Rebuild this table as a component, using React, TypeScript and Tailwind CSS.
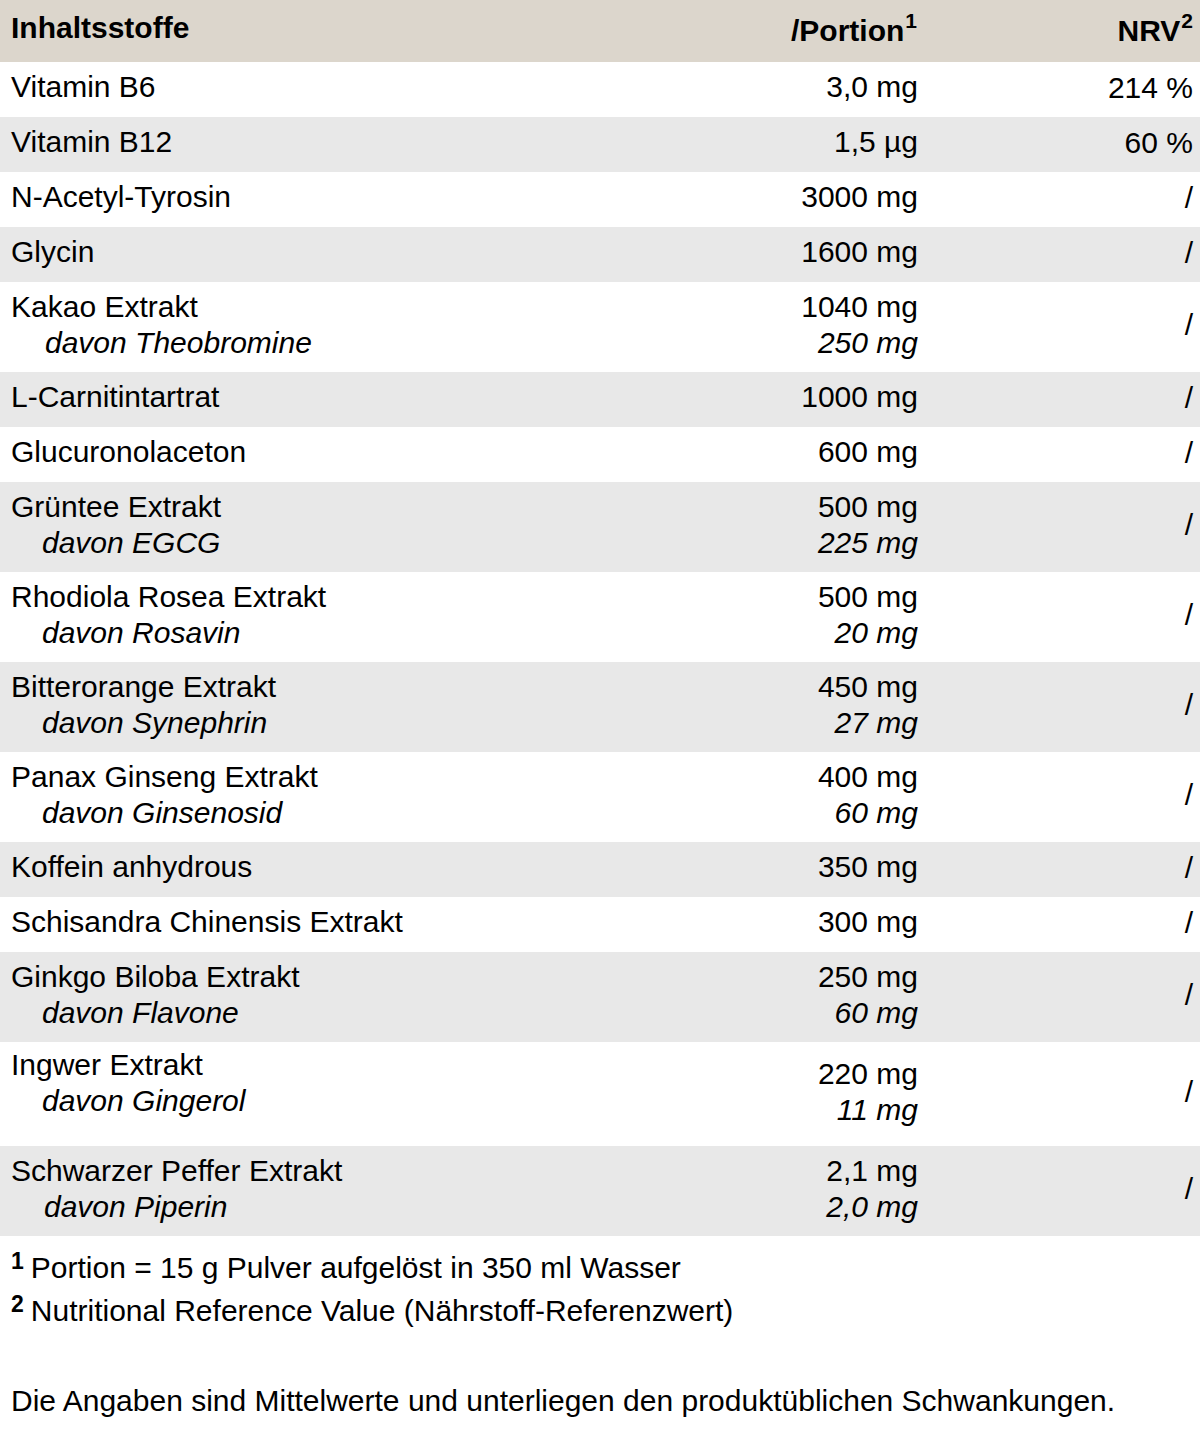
import React from 'react';

type Row = {
  name: string;
  amount: string;
  nrv: string;
  sub?: string;
  subAmount?: string;
  subIndent?: string;
};

const rows: Row[] = [
  { name: 'Vitamin B6', amount: '3,0 mg', nrv: '214 %' },
  { name: 'Vitamin B12', amount: '1,5 µg', nrv: '60 %' },
  { name: 'N-Acetyl-Tyrosin', amount: '3000 mg', nrv: '/' },
  { name: 'Glycin', amount: '1600 mg', nrv: '/' },
  { name: 'Kakao Extrakt', amount: '1040 mg', nrv: '/', sub: 'davon Theobromine', subAmount: '250 mg', subIndent: 'pl-[34px]' },
  { name: 'L-Carnitintartrat', amount: '1000 mg', nrv: '/' },
  { name: 'Glucuronolaceton', amount: '600 mg', nrv: '/' },
  { name: 'Grüntee Extrakt', amount: '500 mg', nrv: '/', sub: 'davon EGCG', subAmount: '225 mg' },
  { name: 'Rhodiola Rosea Extrakt', amount: '500 mg', nrv: '/', sub: 'davon Rosavin', subAmount: '20 mg' },
  { name: 'Bitterorange Extrakt', amount: '450 mg', nrv: '/', sub: 'davon Synephrin', subAmount: '27 mg' },
  { name: 'Panax Ginseng Extrakt', amount: '400 mg', nrv: '/', sub: 'davon Ginsenosid', subAmount: '60 mg' },
  { name: 'Koffein anhydrous', amount: '350 mg', nrv: '/' },
  { name: 'Schisandra Chinensis Extrakt', amount: '300 mg', nrv: '/' },
  { name: 'Ginkgo Biloba Extrakt', amount: '250 mg', nrv: '/', sub: 'davon Flavone', subAmount: '60 mg' },
  { name: 'Ingwer Extrakt', amount: '220 mg', nrv: '/', sub: 'davon Gingerol', subAmount: '11 mg' },
  { name: 'Schwarzer Peffer Extrakt', amount: '2,1 mg', nrv: '/', sub: 'davon Piperin', subAmount: '2,0 mg', subIndent: 'pl-[33px]' },
];

function TableRow({ row, index }: { row: Row; index: number }) {
  const bg = index % 2 === 0 ? 'bg-white' : 'bg-[#e8e8e8]';
  const tall = row.name === 'Ingwer Extrakt';
  const height = row.sub ? (tall ? 'h-[104px]' : 'h-[90px]') : 'h-[55px]';

  return (
    <div className={`grid grid-cols-[737px_193px_1fr] ${bg} ${height}`}>
      <div className={`flex flex-col pl-[11px] ${tall ? 'justify-start pt-[5px]' : 'justify-center pb-[5px]'}`}>
        <span>{row.name}</span>
        {row.sub && <span className={`italic ${row.subIndent ?? 'pl-[31px]'}`}>{row.sub}</span>}
      </div>
      <div className="flex flex-col items-end justify-center pr-[12px] pb-[5px]">
        <span>{row.amount}</span>
        {row.subAmount && <span className="italic">{row.subAmount}</span>}
      </div>
      <div className="flex items-center justify-end pr-[7px] pb-[4px]">{row.nrv}</div>
    </div>
  );
}

export default function App() {
  return (
    <div className="w-[1200px] bg-white text-black text-[30px] leading-[36px] font-['Liberation_Sans',Arial,sans-serif]">
      <div className="grid grid-cols-[737px_193px_1fr] h-[62px] bg-[#dcd6cc] font-bold">
        <div className="flex items-center pl-[11px] pb-[6px]">Inhaltsstoffe</div>
        <div className="flex items-center justify-end pr-[13px]">
          /Portion<sup className="text-[21px] ml-[1px] relative -top-[10px]">1</sup>
        </div>
        <div className="flex items-center justify-end pr-[7px]">
          NRV<sup className="text-[21px] ml-[1px] relative -top-[10px]">2</sup>
        </div>
      </div>

      {rows.map((row, i) => (
        <TableRow key={row.name} row={row} index={i} />
      ))}

      <div className="pl-[11px] pt-[10px]">
        <div className="leading-[43px]">
          <sup className="font-bold text-[23px] mr-[7px] relative -top-[9px]">1</sup>Portion = 15 g Pulver aufgelöst in 350 ml Wasser
        </div>
        <div className="leading-[43px]">
          <sup className="font-bold text-[23px] mr-[7px] relative -top-[9px]">2</sup>Nutritional Reference Value (Nährstoff-Referenzwert)
        </div>
        <div className="mt-[47px] leading-[43px]">
          Die Angaben sind Mittelwerte und unterliegen den produktüblichen Schwankungen.
        </div>
      </div>
    </div>
  );
}
